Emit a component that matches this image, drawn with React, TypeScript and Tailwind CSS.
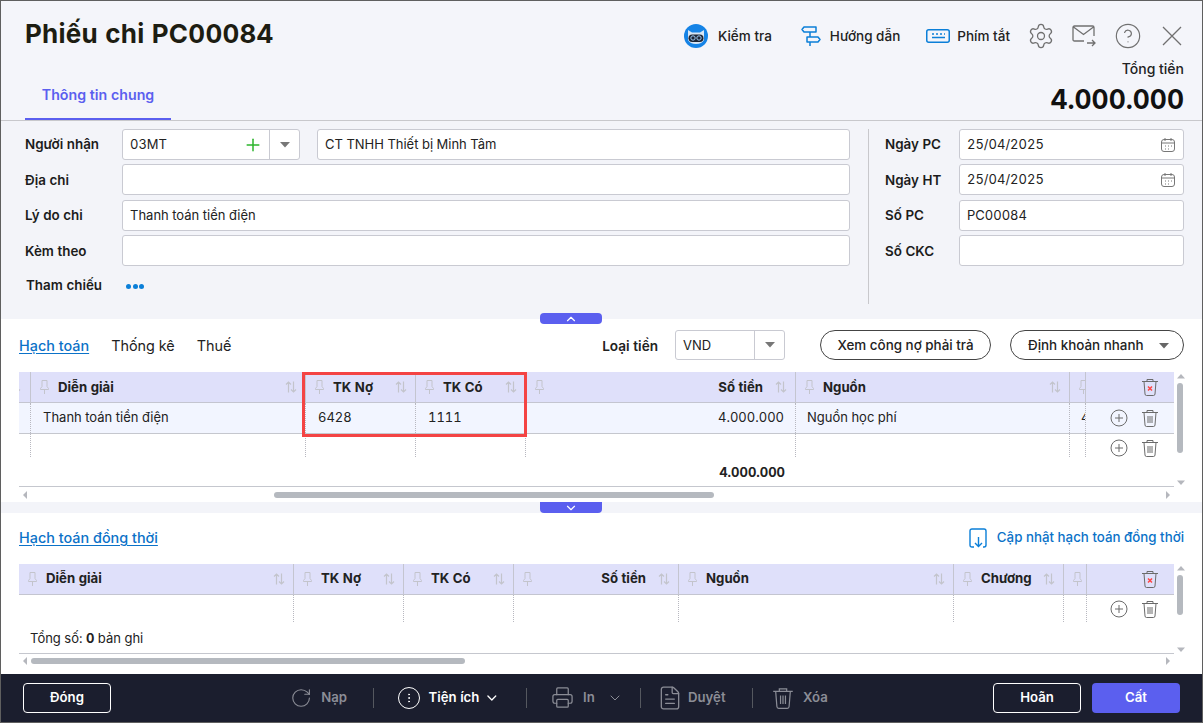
import { ChevronDown, ChevronUp, CircleHelp, Plus, Printer, RotateCw, Settings, FileText, EllipsisVertical } from 'lucide-react';

function Pin() {
  return (
    <svg width="9" height="14" viewBox="0 0 9 14" fill="none" stroke="#c3c4cc" strokeWidth="1" className="shrink-0">
      <path d="M2 .5h5v6l1.500 2v1h-8v-1l1.500-2zM4.500 9.500V14" />
    </svg>
  );
}

function Sort({ className = '' }: any) {
  return (
    <svg width="12" height="12" viewBox="0 0 12 12" fill="none" stroke="#c3c4cc" strokeWidth="1.200" className={`shrink-0 ${className}`}>
      <path d="M3.500 11.500V1M1 3.500 3.500 1 6 3.500M8.500 .5V11M6 8.500 8.500 11 11 8.500" />
    </svg>
  );
}

function Trash({ size = 18, cross = false, color = '#6b6b6b' }: any) {
  return (
    <svg width={size} height={size} viewBox="0 0 18 18" fill="none" stroke={color} strokeWidth="1" className="shrink-0">
      <path d="M1 3.500h16M6 3.500V1.500h6v2M3 3.500l1 12.500q.1 1.500 1.500 1.500h7q1.400 0 1.500-1.500l1-12.500" />
      {cross ? <path d="M7 8.500l4 4M11 8.500l-4 4" stroke="#f44" strokeWidth="1.500" /> : <path d="M7 7v7M9 7v7M11 7v7" />}
    </svg>
  );
}

function AddCircle() {
  return (
    <svg width="18" height="18" viewBox="0 0 18 18" fill="none" stroke="#6b6b6b" strokeWidth="1">
      <circle cx="9" cy="9" r="8" />
      <path d="M9 5v8M5 9h8" />
    </svg>
  );
}

function Tri({ dir = 'down', color = '#8a8a8a', size = 4 }: any) {
  const d = dir === 'down' ? 'M0 1.500h8L4 6z' : dir === 'up' ? 'M0 6.500h8L4 2z' : dir === 'left' ? 'M6 0v8L2 4z' : 'M2 0v8l4-4z';
  return (
    <svg width={size * 2} height={size * 2} viewBox="0 0 8 8" className="shrink-0">
      <path d={d} fill={color} />
    </svg>
  );
}

function Robot() {
  return (
    <svg width="24" height="24" viewBox="0 0 24 24">
      <circle cx="12" cy="12" r="12" fill="#1583e6" />
      <path d="M4 6l4 2.500h8L20 6v10q-2 4-8 4t-8-4z" fill="#d8e6f5" />
      <rect x="4.500" y="10.500" width="15" height="7.500" rx="3.700" fill="#1d2433" />
      <circle cx="9" cy="14" r="2.200" fill="none" stroke="#9cc8f2" strokeWidth="1" />
      <circle cx="15" cy="14" r="2.200" fill="none" stroke="#9cc8f2" strokeWidth="1" />
    </svg>
  );
}

function Signpost() {
  return (
    <svg width="20" height="22" viewBox="0 0 20 22" fill="none" stroke="#0b7fd8" strokeWidth="1.500" strokeLinejoin="round">
      <path d="M3 2h12v5H3L1 4.500zM6 12h11l2 2.500-2 2.500H6zM9 7v5M9 17v4" />
    </svg>
  );
}

function KeyboardIcon() {
  return (
    <svg width="24" height="14" viewBox="0 0 24 14" fill="none" stroke="#0b7fd8">
      <rect x=".75" y=".75" width="22.500" height="12.500" rx="2" strokeWidth="1.500" />
      <path d="M6 5h2M10 5h2M14 5h2M18 5h1M6 8.500h13" strokeWidth="1.300" />
    </svg>
  );
}

function MailSend() {
  return (
    <svg width="24" height="22" viewBox="0 0 24 22" fill="none" stroke="#707070" strokeWidth="1.300">
      <path d="M12 16H2.500Q1 16 1 14.500V2.500Q1 1 2.500 1h18Q22 1 22 2.500V11M1.500 2l10 7.500L21.500 2M15 18h8M20 15l3 3-3 3" />
    </svg>
  );
}

function CloseIcon() {
  return (
    <svg width="20" height="20" viewBox="0 0 20 20" fill="none" stroke="#707070" strokeWidth="1.300">
      <path d="M1 1l18 18M19 1 1 19" />
    </svg>
  );
}

function ImportIcon() {
  return (
    <svg width="18" height="20" viewBox="0 0 18 20" fill="none" stroke="#0b7fd8" strokeWidth="1.400">
      <path d="M5 19H3q-2 0-2-2V3q0-2 2-2h12q2 0 2 2v14q0 2-2 2h-1M9.500 9v9M6 15l3.500 3.500L13 15" />
    </svg>
  );
}

function Input({ value = '', className = '', right }: any) {
  return (
    <div className={`flex items-center h-[31px] px-[7px] bg-white border border-[#c9cad2] rounded-[3px] text-[13px] text-[#222] ${className}`}>
      <span className="flex-1">{value}</span>
      {right}
    </div>
  );
}

function Calendar() {
  return (
    <svg width="16" height="16" viewBox="0 0 16 16" fill="none" stroke="#777" strokeWidth="1">
      <rect x="1.500" y="2.500" width="13" height="12" rx="2.500" />
      <path d="M1.500 6h13M5 1v3M11 1v3M5 9h1M8 9h1M11 9h1M5 12h1M8 12h1" />
    </svg>
  );
}

function Label({ children, className = '' }: any) {
  return <div className={`text-[13.4px] font-semibold text-[#1c1c1c] ${className}`}>{children}</div>;
}

function HeadCell({ w, label, align, stub, clear, flat }: any) {
  return (
    <div className={`flex items-center h-full shrink-0 border-r border-[#c4c5d0] overflow-hidden ${clear ? '' : 'pl-[9px]'} ${stub || clear ? '' : 'pr-[8px]'}`} style={{ width: w }}>
      {clear && <Sort className="-ml-[10px]" />}
      {!clear && <Pin />}
      {label && align === 'right' && <div className="flex-1" />}
      {label && <span className={`ml-[9px] text-[13.2px] font-bold text-[#222] whitespace-nowrap ${flat ? '' : 'pt-px'}`}>{label}</span>}
      {!stub && !clear && <div className={align === 'right' ? 'w-[12px]' : 'flex-1'} />}
      {!stub && !clear && <Sort />}
    </div>
  );
}

function VBar({ thumbTop, thumbH }: any) {
  return (
    <div className="relative w-[9px] ml-[2px] shrink-0 flex flex-col items-center justify-between">
      <Tri dir="up" color="#b5b7bd" />
      <div className="absolute left-[1px] w-[6px] rounded bg-[#b5b9bf]" style={{ top: thumbTop, height: thumbH }} />
      <Tri dir="down" color="#b5b7bd" />
    </div>
  );
}

function HBar({ left, width }: any) {
  return (
    <div className="relative h-[10px] flex items-center justify-between px-[2px]">
      <Tri dir="left" color="#b5b7bd" />
      <div className="absolute top-[2px] h-[6px] rounded bg-[#b5b9bf]" style={{ left, width }} />
      <Tri dir="right" color="#b5b7bd" />
    </div>
  );
}

const cols1 = [12, 275, 110, 110, 270, 274, 16];
const cols2 = [275, 110, 110, 165, 275, 110, 23];

function DottedCells({ cols }: { cols: number[] }) {
  return (
    <>
      {cols.map((w, i) => (
        <div key={i} className="h-full shrink-0 border-r border-dotted border-[#b8b8c0]" style={{ width: w }} />
      ))}
    </>
  );
}

function Actions({ className = '' }: any) {
  return (
    <div className={`flex-1 flex justify-end items-center gap-[13px] pr-[15px] ${className}`}>
      <AddCircle />
      <Trash />
    </div>
  );
}

function FootBtn({ icon, label, dim, chevron }: any) {
  return (
    <div className={`flex items-center gap-[9px] text-[13.2px] font-semibold whitespace-nowrap ${dim ? 'text-[#8b8d96]' : 'text-white'}`}>
      {icon}
      <span>{label}</span>
      {chevron}
    </div>
  );
}

function Sep({ className = '' }: any) {
  return <div className={`w-px h-[20px] bg-[#55585f] ${className}`} />;
}

export default function App() {
  return (
    <div className="w-[1203px] h-[723px] flex flex-col overflow-hidden bg-white border border-[#5f5f5f] font-[Inter,sans-serif] tabular-nums text-[13px] text-[#222]">
      {/* header */}
      <header className="h-[120px] shrink-0 flex bg-[#f4f5fa] border-b border-[#c8c8cc] pl-[24px] pr-[18px]">
        <div className="flex-1 flex flex-col">
          <h1 className="mt-[16px] text-[26px] leading-[34px] font-bold text-[#1d1d12] tracking-[0.25px]">Phiếu chi PC00084</h1>
          <div className="mt-auto w-[146px] h-[38px] pb-[10px] flex items-center justify-center border-b-[2px] border-[#5b5fef] text-[14.2px] font-semibold text-[#5b5fef]">
            Thông tin chung
          </div>
        </div>
        <div className="flex flex-col items-end">
          <div className="mt-[22px] h-[26px] flex items-center text-[13.5px] font-medium">
            <Robot />
            <span className="ml-[10px]">Kiểm tra</span>
            <span className="ml-[29px]"><Signpost /></span>
            <span className="ml-[9px]">Hướng dẫn</span>
            <span className="ml-[26px]"><KeyboardIcon /></span>
            <span className="ml-[7px]">Phím tắt</span>
            <Settings size={28} strokeWidth={1.1} className="ml-[17px] text-[#707070]" />
            <span className="ml-[17px]"><MailSend /></span>
            <CircleHelp size={28} strokeWidth={1} className="ml-[18px] text-[#707070]" />
            <span className="ml-[20px] mr-[2px]"><CloseIcon /></span>
          </div>
          <div className="mt-[11px] text-[14px] font-medium leading-[18px]">Tổng tiền</div>
          <div className="mt-[5px] text-[26.400px] leading-[32px] font-bold text-[#111]">4.000.000</div>
        </div>
      </header>

      {/* form */}
      <section className="h-[198px] shrink-0 flex bg-[#f3f4f9] pt-[8px] pl-[24px] pr-[18px]">
        <div className="w-[825px] flex flex-col gap-[4.400px]">
          <div className="flex items-center">
            <Label className="w-[97px]">Người nhận</Label>
            <div className="w-[178px] h-[31px] flex bg-white border border-[#c9cad2] rounded-[3px]">
              <div className="flex-1 flex items-center pl-[7px] pr-[6px] border-r border-[#c9cad2]">
                <span className="flex-1">03MT</span>
                <Plus size={20} strokeWidth={1.800} className="text-[#2db52d]" />
              </div>
              <div className="w-[29px] flex items-center justify-center">
                <Tri color="#777" size={5} />
              </div>
            </div>
            <Input value="CT TNHH Thiết bị Minh Tâm" className="ml-[17px] flex-1" />
          </div>
          <div className="flex items-center">
            <Label className="w-[97px]">Địa chi</Label>
            <Input className="flex-1" />
          </div>
          <div className="flex items-center">
            <Label className="w-[97px]">Lý do chi</Label>
            <Input value="Thanh toán tiền điện" className="flex-1" />
          </div>
          <div className="flex items-center">
            <Label className="w-[97px]">Kèm theo</Label>
            <Input className="flex-1" />
          </div>
          <div className="flex items-center h-[31px]">
            <Label className="w-[101px] pl-px pb-[2px]">Tham chiếu</Label>
            <div className="flex gap-[1.500px]">
              <i className="w-[5px] h-[5px] rounded-full bg-[#0b7fd8]" />
              <i className="w-[5px] h-[5px] rounded-full bg-[#0b7fd8]" />
              <i className="w-[5px] h-[5px] rounded-full bg-[#0b7fd8]" />
            </div>
          </div>
        </div>
        <div className="ml-[18px] mb-[15px] w-px bg-[#c8c8cc]" />
        <div className="ml-[16px] flex-1 flex flex-col gap-[4.400px]">
          <div className="flex items-center">
            <Label className="w-[74px]">Ngày PC</Label>
            <Input value="25/04/2025" className="flex-1" right={<Calendar />} />
          </div>
          <div className="flex items-center">
            <Label className="w-[74px]">Ngày HT</Label>
            <Input value="25/04/2025" className="flex-1" right={<Calendar />} />
          </div>
          <div className="flex items-center">
            <Label className="w-[74px]">Số PC</Label>
            <Input value="PC00084" className="flex-1" />
          </div>
          <div className="flex items-center">
            <Label className="w-[74px]">Số CKC</Label>
            <Input className="flex-1" />
          </div>
        </div>
      </section>

      {/* accounting grid */}
      <section className="relative h-[183px] shrink-0 bg-white pl-[18px] pr-[18px]">
        <div className="absolute left-[539px] top-[-6px] w-[62px] h-[11px] rounded-[4px] bg-[#5b5fef] flex items-center justify-center">
          <ChevronUp size={14} strokeWidth={2} className="text-white" />
        </div>
        <div className="h-[30px] mt-[11px] flex items-center text-[14.400px]">
          <span className="pt-[2px] text-[#0b72c8] underline underline-offset-2 font-medium">Hạch toán</span>
          <span className="pt-[2px] ml-[22px]">Thống kê</span>
          <span className="pt-[2px] ml-[22px]">Thuế</span>
          <span className="pt-[2px] ml-auto text-[13.6px] font-semibold">Loại tiền</span>
          <div className="ml-[17px] w-[110px] h-[30px] flex bg-white border border-[#c9cad2] rounded-[3px] text-[13px]">
            <div className="flex-1 flex items-center pt-px px-[7px] border-r border-[#c9cad2]">VND</div>
            <div className="w-[29px] flex items-center justify-center"><Tri color="#777" size={5} /></div>
          </div>
          <div className="ml-[35px] w-[171px] h-[30px] pt-px flex items-center justify-center rounded-full border border-[#444] text-[13.4px] font-medium">
            Xem công nợ phải trả
          </div>
          <div className="ml-[19px] w-[174px] h-[30px] pt-px flex items-center justify-between pl-[17px] pr-[14px] rounded-full border border-[#444] text-[13.4px] font-medium">
            Định khoản nhanh
            <Tri color="#666" size={5} />
          </div>
        </div>
        <div className="mt-[12px] flex h-[115px]">
          <div className="relative w-[1155px] shrink-0 flex flex-col border-b border-[#c5c7ce]">
            <div className="h-[31px] shrink-0 flex bg-[#dfe0fa] border-b border-[#c4c5d0]">
              <HeadCell w={12} clear />
              <HeadCell w={275} label="Diễn giải" />
              <HeadCell w={110} label="TK Nợ" />
              <HeadCell w={110} label="TK Có" />
              <HeadCell w={270} label="Số tiền" align="right" />
              <HeadCell w={274} label="Nguồn" />
              <HeadCell w={16} stub />
              <div className="flex-1 flex justify-end items-center pr-[15px]"><Trash cross /></div>
            </div>
            <div className="h-[31px] shrink-0 flex bg-[#f2f5ff] border-b border-[#c5c7ce] overflow-hidden">
              <div className="w-[12px] shrink-0 border-r border-dotted border-[#b8b8c0]" />
              <div className="w-[275px] shrink-0 flex items-center pl-[12px] border-r border-dotted border-[#b8b8c0]">Thanh toán tiền điện</div>
              <div className="w-[110px] shrink-0 flex items-center pl-[12px] border-r border-dotted border-[#b8b8c0]">6428</div>
              <div className="w-[110px] shrink-0 flex items-center pl-[12px] border-r border-dotted border-[#b8b8c0]">1111</div>
              <div className="w-[270px] shrink-0 flex items-center justify-end pr-[11px] border-r border-dotted border-[#b8b8c0]">4.000.000</div>
              <div className="w-[274px] shrink-0 flex items-center pl-[11px] border-r border-dotted border-[#b8b8c0]">Nguồn học phí</div>
              <div className="w-[16px] shrink-0 flex items-center pl-[11px] overflow-hidden border-r border-dotted border-[#b8b8c0]">4</div>
              <Actions />
            </div>
            <div className="h-[23px] shrink-0 flex overflow-hidden">
              <DottedCells cols={cols1} />
              <Actions className="pt-[5px]" />
            </div>
            <div className="flex-1 flex items-center justify-end pt-[2px] pr-[389px] font-bold">4.000.000</div>
            <div className="absolute left-[283px] top-[0px] w-[225px] h-[65px] border-[3px] border-[#f44444]" />
          </div>
          <VBar thumbTop={11} thumbH={70} />
        </div>
        <div className="w-[1155px] mt-[3px]">
          <HBar left={255} width={440} />
        </div>
      </section>

      <div className="h-[11px] shrink-0 bg-[#f3f4f9] flex pl-[539px]">
        <div className="w-[62px] h-full rounded-b-[4px] bg-[#5b5fef] flex items-center justify-center">
          <ChevronDown size={14} strokeWidth={2} className="text-white" />
        </div>
      </div>

      {/* concurrent entries */}
      <section className="flex-1 bg-white pl-[18px] pr-[18px] min-h-0">
        <div className="h-[26px] mt-[12px] flex items-center justify-between text-[14.400px] font-medium">
          <span className="text-[#0b72c8] underline underline-offset-2">Hạch toán đồng thời</span>
          <div className="flex items-center gap-[10px] text-[13.3px] text-[#0b72c8]">
            <ImportIcon />
            <span>Cập nhật hạch toán đồng thời</span>
          </div>
        </div>
        <div className="mt-[13px] flex h-[90px]">
          <div className="w-[1155px] shrink-0 flex flex-col border-b border-[#c5c7ce]">
            <div className="h-[31px] shrink-0 flex bg-[#dfe0fa] border-b border-[#c4c5d0]">
              <HeadCell flat w={275} label="Diễn giải" />
              <HeadCell flat w={110} label="TK Nợ" />
              <HeadCell flat w={110} label="TK Có" />
              <HeadCell flat w={165} label="Số tiền" align="right" />
              <HeadCell flat w={275} label="Nguồn" />
              <HeadCell flat w={110} label="Chương" />
              <HeadCell flat w={23} stub />
              <div className="flex-1 flex justify-end items-center pr-[15px]"><Trash cross /></div>
            </div>
            <div className="h-[27px] shrink-0 flex">
              <DottedCells cols={cols2} />
              <Actions />
            </div>
            <div className="flex-1 flex items-center pt-[2px] pl-[11px]">
              <span>Tổng số: <b>0</b> bản ghi</span>
            </div>
          </div>
          <VBar thumbTop={11} thumbH={40} />
        </div>
        <div className="w-[1155px] mt-[2px]">
          <HBar left={12} width={434} />
        </div>
      </section>

      {/* footer */}
      <footer className="h-[48px] shrink-0 flex items-center bg-[#1b1e2e] pb-[1px] pl-[22px] pr-[22px]">
        <div className="w-[88px] h-[30px] flex items-center justify-center border border-white rounded-[4px] text-white text-[13.2px] font-semibold">Đóng</div>
        <div className="ml-[179px] w-[57px]">
          <FootBtn dim label="Nạp" icon={<RotateCw size={24} strokeWidth={1.2} />} />
        </div>
        <Sep className="ml-[26px]" />
        <div className="ml-[24px] w-[102px]">
          <FootBtn label="Tiện ích" icon={<span className="w-[22px] h-[22px] rounded-full border-[1.500px] border-white flex items-center justify-center"><EllipsisVertical size={12} /></span>} chevron={<ChevronDown size={16} strokeWidth={2} className="-ml-[4px]" />} />
        </div>
        <Sep className="ml-[26px]" />
        <div className="ml-[24px] w-[72px]">
          <FootBtn dim label="In" icon={<Printer size={23} strokeWidth={1.3} />} chevron={<ChevronDown size={16} strokeWidth={1.5} className="ml-[3px]" />} />
        </div>
        <Sep className="ml-[17px]" />
        <div className="ml-[16px] w-[69px]">
          <FootBtn dim label="Duyệt" icon={<FileText size={26} strokeWidth={1.2} className="-mr-[4px]" />} />
        </div>
        <Sep className="ml-[26px]" />
        <div className="ml-[19px]">
          <FootBtn dim label="Xóa" icon={<Trash size={22} color="#8b8d96" />} />
        </div>
        <div className="ml-auto w-[88px] h-[30px] flex items-center justify-center border border-white rounded-[4px] text-white text-[13.2px] font-semibold">Hoãn</div>
        <div className="ml-[11px] w-[88px] h-[30px] flex items-center justify-center rounded-[4px] bg-[#5b5fef] text-white text-[13.2px] font-semibold">Cất</div>
      </footer>
    </div>
  );
}
